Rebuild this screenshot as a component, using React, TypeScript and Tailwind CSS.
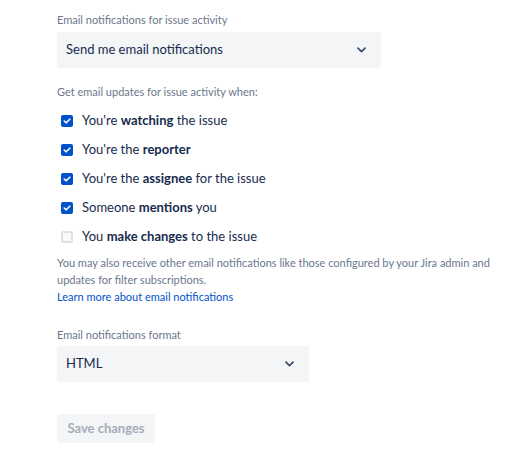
import { useState } from 'react';

type Option = {
    id: string;
    before: string;
    bold: string;
    after: string;
    checked: boolean;
};

const initialOptions: Option[] = [
    { id: 'watching', before: "You're ", bold: 'watching', after: ' the issue', checked: true },
    { id: 'reporter', before: "You're the ", bold: 'reporter', after: '', checked: true },
    { id: 'assignee', before: "You're the ", bold: 'assignee', after: ' for the issue', checked: true },
    { id: 'mentions', before: 'Someone ', bold: 'mentions', after: ' you', checked: true },
    { id: 'changes', before: 'You ', bold: 'make changes', after: ' to the issue', checked: false },
];

function Chevron() {
    return (
        <svg width="9" height="6" viewBox="0 0 9 6" className="shrink-0">
            <path d="M1 1.2 L4.5 4.6 L8 1.2" fill="none" stroke="#42526E" strokeWidth="1.8" strokeLinecap="round" strokeLinejoin="round" />
        </svg>
    );
}

function SelectBox({ value, width }: { value: string; width: string }) {
    return (
        <button
            className={`flex h-9 items-center justify-between rounded-[3px] bg-[#F4F5F7] pl-[9px] pr-[15px] text-left text-[13px] text-[#172B4D] ${width}`}
        >
            <span>{value}</span>
            <Chevron />
        </button>
    );
}

function Checkbox({ checked, onChange }: { checked: boolean; onChange: () => void }) {
    return (
        <button
            onClick={onChange}
            className={`flex h-3 w-3 shrink-0 items-center justify-center rounded-[2px] ${
                checked ? 'bg-[#0052CC]' : 'border-2 border-[#DFE1E6] bg-[#FAFBFC]'
            }`}
        >
            {checked && (
                <svg width="8" height="6" viewBox="0 0 8 6">
                    <path d="M1.2 3 L3.2 4.8 L6.8 1.2" fill="none" stroke="white" strokeWidth="1.6" strokeLinecap="round" strokeLinejoin="round" />
                </svg>
            )}
        </button>
    );
}

export default function App() {
    const [options, setOptions] = useState(initialOptions);

    const toggle = (id: string) =>
        setOptions((prev) => prev.map((o) => (o.id === id ? { ...o, checked: !o.checked } : o)));

    return (
        <div className="min-h-[452px] bg-white pl-[57px] pt-3 font-['Lato',sans-serif]">
            <p className="text-[11px] leading-4 text-[#6B778C]">Email notifications for issue activity</p>
            <div className="mt-1">
                <SelectBox value="Send me email notifications" width="w-[324px]" />
            </div>

            <p className="mt-4 text-[11px] leading-4 text-[#6B778C]">Get email updates for issue activity when:</p>

            {/* Checkboxes */}
            <div className="mt-[11px] flex flex-col gap-[9px]">
                {options.map((o) => (
                    <label key={o.id} className="flex h-5 items-center gap-[9px] pl-1 text-[13px] text-[#172B4D]">
                        <Checkbox checked={o.checked} onChange={() => toggle(o.id)} />
                        <span>
                            {o.before}
                            <strong className="font-bold">{o.bold}</strong>
                            {o.after}
                        </span>
                    </label>
                ))}
            </div>

            <p className="mt-[7px] w-[440px] text-[11px] leading-[17px] text-[#6B778C]">
                You may also receive other email notifications like those configured by your Jira admin and updates for filter subscriptions.
            </p>
            <a href="#" className="block text-[11px] leading-[18px] text-[#0052CC]">
                Learn more about email notifications
            </a>

            <p className="mt-[21px] text-[11px] leading-4 text-[#6B778C]">Email notifications format</p>
            <div className="mt-[3px]">
                <SelectBox value="HTML" width="w-[252px]" />
            </div>

            <button
                disabled
                className="mt-8 h-[29px] w-[98px] rounded-[3px] bg-[#F4F5F7] text-[13px] font-bold text-[#A5ADBA]"
            >
                Save changes
            </button>
        </div>
    );
}
